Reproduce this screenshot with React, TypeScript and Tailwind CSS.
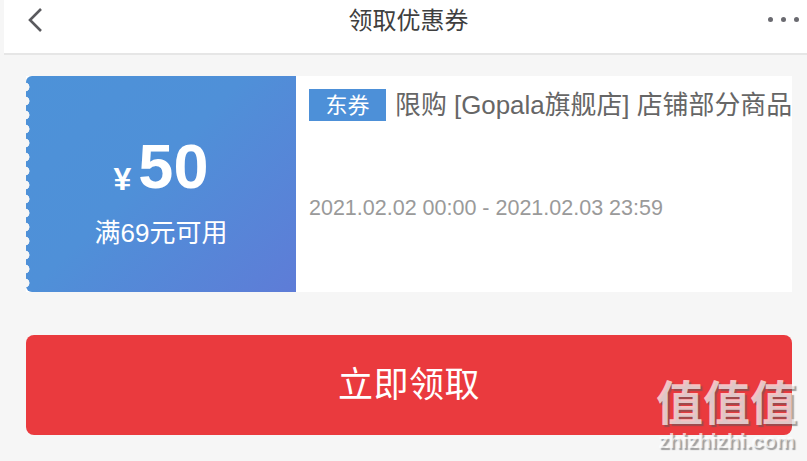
export default function App() {
  return (
    <div className="relative h-[461px] w-[807px] overflow-hidden bg-[#f6f6f6] font-['Liberation_Sans','Noto_Sans_CJK_SC',sans-serif]">
      <header className="ml-[4px] flex h-[55px] items-center justify-between border-b-2 border-[#e6e6e6] bg-white pb-[12px] pl-[23px] pr-[8px]">
        <svg width="16" height="26" viewBox="0 0 16 26" fill="none" className="mt-[-2px]">
          <path d="M14 2 L3 13 L14 24" stroke="#5a5a5e" strokeWidth="2.6" />
        </svg>
        <h1 className="ml-[6px] text-[24px] leading-none text-[#3f3f3f]">领取优惠券</h1>
        <div className="mt-[-2px] flex gap-[8px]">
          <span className="h-[5px] w-[5px] rounded-full bg-[#6a6a70]" />
          <span className="h-[5px] w-[5px] rounded-full bg-[#6a6a70]" />
          <span className="h-[5px] w-[5px] rounded-full bg-[#6a6a70]" />
        </div>
      </header>

      <main className="px-[26px] pr-[15px]">
        <section className="mt-[21px] flex h-[216px] bg-white">
          <div className="relative flex w-[270px] shrink-0 flex-col items-center rounded-l-[6px] bg-[linear-gradient(135deg,#4d92d8_0%,#4f90d8_45%,#5e7cd7_100%)] pt-[59px] text-white">
            <div className="absolute bottom-[2px] left-[-1px] top-[4px] w-[7px] bg-[radial-gradient(circle_at_0px_7px,#f6f6f6_4.2px,transparent_4.8px)] bg-[length:7px_14px]" />
            <div className="flex items-end leading-none">
              <span className="mb-[3px] mr-[7px] text-[32px] font-bold leading-none">¥</span>
              <span className="text-[63px] font-bold leading-none">50</span>
            </div>
            <p className="mt-[19px] text-[26px] leading-[32px]">满69元可用</p>
          </div>

          <div className="min-w-0 flex-1 pl-[13px] pt-[13px]">
            <div className="flex items-center">
              <span className="flex h-[32px] w-[77px] shrink-0 items-center justify-center bg-[#4d90d8] text-[22px] text-white">东券</span>
              <span className="ml-[9px] whitespace-nowrap text-[25.9px] leading-[32px] text-[#666666]">限购 [Gopala旗舰店] 店铺部分商品</span>
            </div>
            <p className="mt-[75px] whitespace-nowrap text-[21.5px] leading-[24px] text-[#9a9a9a]">2021.02.02 00:00 - 2021.02.03 23:59</p>
          </div>
        </section>

        <button className="mt-[43px] flex h-[100px] w-full items-center justify-center rounded-[8px] bg-[#ea3a3e] text-[35px] tracking-[0.5px] text-white">
          立即领取
        </button>
      </main>

      {/* watermark */}
      <div className="absolute right-[10px] top-[379px] flex flex-col items-center text-white/70 [text-shadow:2px_2px_1px_rgba(90,90,90,0.55)]">
        <span className="text-[47px] font-bold leading-[50px]">值值值</span>
        <span className="mt-[-1px] text-[21px] font-bold leading-[26px]">zhizhizhi.com</span>
      </div>
    </div>
  );
}
